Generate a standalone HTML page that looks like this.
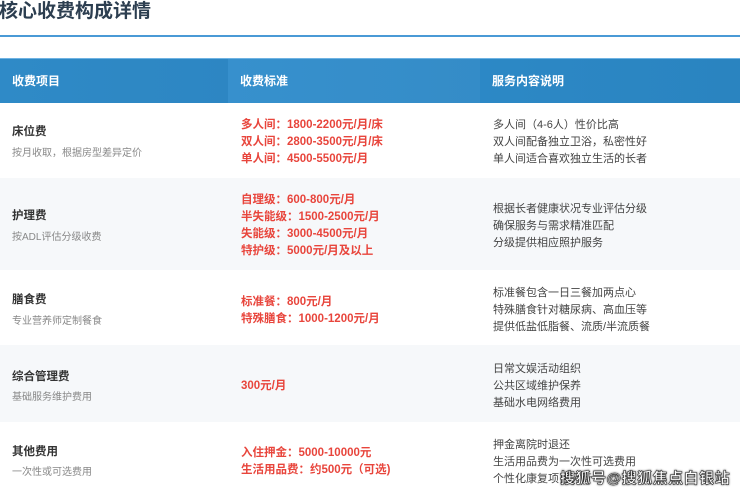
<!DOCTYPE html>
<html><head><meta charset="utf-8"><style>
*{margin:0;padding:0;box-sizing:border-box}
body{width:740px;height:493px;overflow:hidden;background:#fff;font-family:"Liberation Sans","Noto Sans CJK SC",sans-serif;position:relative}
h1{position:absolute;left:-1px;top:-1px;font-size:19px;font-weight:bold;color:#2c3e50;line-height:26px}
.line{position:absolute;left:0;top:35px;width:740px;height:2px;background:#4a9ad6}
.hd{position:absolute;top:58px;left:0;width:740px;height:45px;background:linear-gradient(90deg,#3190d0,#2a84c0);border-top:1px solid #6fb3e3}
.hd div{position:absolute;top:0;height:44px;line-height:44px;color:#fff;font-weight:bold;font-size:12px;padding-left:12px}
.row{position:absolute;left:0;width:740px}
.g{background:#f6f8fa}
.c{position:absolute;font-size:11px;line-height:17px}
.n{font-weight:bold;color:#333;font-size:11.5px}
.s{color:#888;font-size:10px}
.r{color:#e8453c;font-weight:bold;font-size:11.5px}
.d{color:#444;font-size:11px}
.wm{position:absolute;left:560px;top:467px;font-size:15px;font-weight:bold;color:#fff;-webkit-text-stroke:0.6px #333;text-shadow:0 0 2px #000;letter-spacing:0.5px}
</style></head><body>
<h1>核心收费构成详情</h1>
<div class="line"></div>
<div class="hd">
<div style="left:0;width:228px;background:rgba(0,0,0,0.04)">收费项目</div>
<div style="left:228px;width:252px;background:rgba(255,255,255,0.04)">收费标准</div>
<div style="left:480px;width:260px">服务内容说明</div>
</div>

<div class="row" style="top:103px;height:75px"></div>
<div class="c n" style="left:12px;top:124px">床位费</div>
<div class="c s" style="left:12px;top:145px">按月收取，根据房型差异定价</div>
<div class="c r" style="left:241px;top:117px">多人间：1800-2200元/月/床<br>双人间：2800-3500元/月/床<br>单人间：4500-5500元/月</div>
<div class="c d" style="left:493px;top:117px">多人间（4-6人）性价比高<br>双人间配备独立卫浴，私密性好<br>单人间适合喜欢独立生活的长者</div>

<div class="row g" style="top:178px;height:92px"></div>
<div class="c n" style="left:12px;top:208px">护理费</div>
<div class="c s" style="left:12px;top:229px">按ADL评估分级收费</div>
<div class="c r" style="left:241px;top:192px">自理级：600-800元/月<br>半失能级：1500-2500元/月<br>失能级：3000-4500元/月<br>特护级：5000元/月及以上</div>
<div class="c d" style="left:493px;top:201px">根据长者健康状况专业评估分级<br>确保服务与需求精准匹配<br>分级提供相应照护服务</div>

<div class="row" style="top:270px;height:75px"></div>
<div class="c n" style="left:12px;top:292px">膳食费</div>
<div class="c s" style="left:12px;top:313px">专业营养师定制餐食</div>
<div class="c r" style="left:241px;top:294px">标准餐：800元/月<br>特殊膳食：1000-1200元/月</div>
<div class="c d" style="left:493px;top:285px">标准餐包含一日三餐加两点心<br>特殊膳食针对糖尿病、高血压等<br>提供低盐低脂餐、流质/半流质餐</div>

<div class="row g" style="top:345px;height:77px"></div>
<div class="c n" style="left:12px;top:369px">综合管理费</div>
<div class="c s" style="left:12px;top:389px">基础服务维护费用</div>
<div class="c r" style="left:241px;top:378px">300元/月</div>
<div class="c d" style="left:493px;top:361px">日常文娱活动组织<br>公共区域维护保养<br>基础水电网络费用</div>

<div class="c n" style="left:12px;top:444px">其他费用</div>
<div class="c s" style="left:12px;top:464px">一次性或可选费用</div>
<div class="c r" style="left:241px;top:445px">入住押金：5000-10000元<br>生活用品费：约500元（可选)</div>
<div class="c d" style="left:493px;top:437px">押金离院时退还<br>生活用品费为一次性可选费用<br>个性化康复项目另行</div>
<div class="wm">搜狐号@搜狐焦点白银站</div>
</body></html>
